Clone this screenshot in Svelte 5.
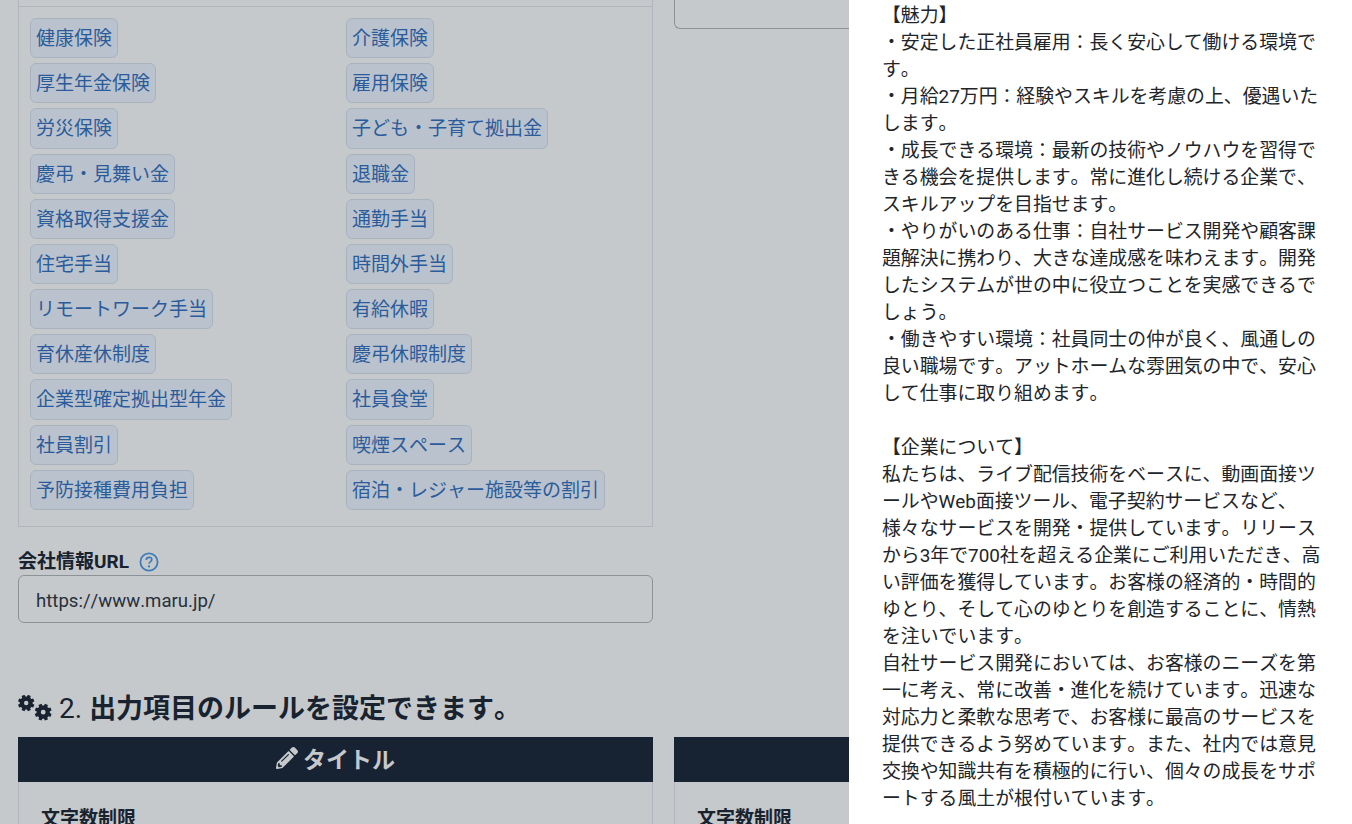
<script>
  const benefits = [
    ['健康保険', '介護保険'],
    ['厚生年金保険', '雇用保険'],
    ['労災保険', '子ども・子育て拠出金'],
    ['慶弔・見舞い金', '退職金'],
    ['資格取得支援金', '通勤手当'],
    ['住宅手当', '時間外手当'],
    ['リモートワーク手当', '有給休暇'],
    ['育休産休制度', '慶弔休暇制度'],
    ['企業型確定拠出型年金', '社員食堂'],
    ['社員割引', '喫煙スペース'],
    ['予防接種費用負担', '宿泊・レジャー施設等の割引']
  ];

  const description = `【魅力】
・安定した正社員雇用：長く安心して働ける環境です。
・月給27万円：経験やスキルを考慮の上、優遇いたします。
・成長できる環境：最新の技術やノウハウを習得できる機会を提供します。常に進化し続ける企業で、スキルアップを目指せます。
・やりがいのある仕事：自社サービス開発や顧客課題解決に携わり、大きな達成感を味わえます。開発したシステムが世の中に役立つことを実感できるでしょう。
・働きやすい環境：社員同士の仲が良く、風通しの良い職場です。アットホームな雰囲気の中で、安心して仕事に取り組めます。

【企業について】
私たちは、ライブ配信技術をベースに、動画面接ツールやWeb面接ツール、電子契約サービスなど、様々なサービスを開発・提供しています。リリースから3年で700社を超える企業にご利用いただき、高い評価を獲得しています。お客様の経済的・時間的ゆとり、そして心のゆとりを創造することに、情熱を注いでいます。
自社サービス開発においては、お客様のニーズを第一に考え、常に改善・進化を続けています。迅速な対応力と柔軟な思考で、お客様に最高のサービスを提供できるよう努めています。また、社内では意見交換や知識共有を積極的に行い、個々の成長をサポートする風土が根付いています。`;

  // gear outline with square teeth
  function gear(cx, cy, outer, inner, hole, teeth) {
    let d = '';
    const step = (Math.PI * 2) / teeth;
    for (let i = 0; i < teeth; i++) {
      const a = i * step + step / 2;
      const pts = [
        [inner, a - step * 0.34],
        [outer, a - step * 0.24],
        [outer, a + step * 0.24],
        [inner, a + step * 0.34]
      ];
      for (const [r, t] of pts) {
        d += `${d ? 'L' : 'M'}${(cx + r * Math.cos(t)).toFixed(2)} ${(cy + r * Math.sin(t)).toFixed(2)}`;
      }
    }
    d += `Z M${cx + hole} ${cy}a${hole} ${hole} 0 1 0 ${-2 * hole} 0a${hole} ${hole} 0 1 0 ${2 * hole} 0Z`;
    return d;
  }
</script>

<div class="page">
  <main class="main">
    <div class="top-row">
      <section class="benefits">
        <div class="benefit-grid">
          {#each benefits as row}
            {#each row as item}
              <div class="cell"><span class="tag">{item}</span></div>
            {/each}
          {/each}
        </div>
      </section>
      <div class="side-box"></div>
    </div>

    <div class="field">
      <div class="label">
        会社情報URL
        <svg class="help" viewBox="0 0 20 20" width="20" height="20" aria-hidden="true">
          <circle cx="10" cy="10" r="8.6" fill="none" stroke="currentColor" stroke-width="1.8" />
          <path d="M7.3 7.9c0-1.6 1.2-2.6 2.8-2.6s2.7 1 2.7 2.3c0 1.1-.6 1.7-1.5 2.3-.8.5-1.2 1-1.2 1.9" fill="none" stroke="currentColor" stroke-width="1.7" />
          <circle cx="10" cy="14.4" r="1.1" fill="currentColor" />
        </svg>
      </div>
      <div class="input">https://www.maru.jp/</div>
    </div>

    <h2 class="heading">
      <svg class="cogs" viewBox="0 0 34 26" width="34" height="26" aria-hidden="true">
        <path fill-rule="evenodd" d={gear(8.2, 8, 8.4, 6.5, 2.2, 8)} />
        <path fill-rule="evenodd" d={gear(25.2, 17.2, 8.6, 6.7, 2.4, 8)} />
      </svg>
      <span class="num">2.</span><span>出力項目のルールを設定できます。</span>
    </h2>

    <div class="rule-row">
      <section class="rule">
        <header class="rule-head">
          <svg viewBox="0 0 512 512" width="22" height="22" aria-hidden="true">
            <path fill="currentColor" d="M497.9 142.1l-46.1 46.1c-4.7 4.7-12.3 4.7-17 0l-111-111c-4.7-4.7-4.7-12.3 0-17l46.1-46.1c18.7-18.7 49.1-18.7 67.9 0l60.1 60.1c18.8 18.7 18.8 49.1 0 67.9zM284.2 99.8L21.6 362.4.4 483.9c-2.9 16.4 11.4 30.6 27.8 27.8l121.5-21.3 262.6-262.6c4.7-4.7 4.7-12.3 0-17l-111-111c-4.8-4.7-12.4-4.7-17.1 0zM124.1 339.9c-5.5-5.5-5.5-14.3 0-19.8l154-154c5.5-5.5 14.3-5.5 19.8 0s5.5 14.3 0 19.8l-154 154c-5.5 5.5-14.3 5.5-19.8 0zM88 424h48v36.3l-64.5 11.3-31.1-31.1L51.7 376H88v48z" />
          </svg>
          タイトル
        </header>
        <div class="rule-body"><strong>文字数制限</strong></div>
      </section>
      <section class="rule">
        <header class="rule-head"></header>
        <div class="rule-body"><strong>文字数制限</strong></div>
      </section>
    </div>
  </main>

  <aside class="panel">{description}</aside>
</div>

<style>
  :global(body) {
    margin: 0;
    background: #c6c9cc;
    font-family: Roboto, "Noto Sans CJK JP", sans-serif;
    font-kerning: none;
  }

  .page {
    display: flex;
    height: 824px;
    overflow: hidden;
    background: #c6c9cc;
    color: #18232f;
  }

  .main {
    width: 849px;
    flex-shrink: 0;
    box-sizing: border-box;
    padding-left: 18px;
    overflow: hidden;
  }

  .top-row {
    display: grid;
    grid-template-columns: 635px 260px;
    column-gap: 21px;
    align-items: start;
  }

  .benefits {
    box-sizing: border-box;
    height: 527px;
    padding: 18px 11px 0;
    border: 1px solid #b1b6bc;
    border-top: none;
    box-shadow: inset 0 6px 0 #c6c9cc, inset 0 7px 0 #b1b6bc;
  }

  .benefit-grid {
    display: grid;
    grid-template-columns: 316px 1fr;
    grid-auto-rows: 40.18px;
    row-gap: 5px;
  }

  .cell {
    display: flex;
  }

  .tag {
    box-sizing: border-box;
    padding: 1px 5px 0;
    line-height: 38px;
    font-size: 19px;
    color: #2a5c9b;
    background: #bac2cd;
    border: 1px solid #a9b3c0;
    border-radius: 6px;
    white-space: nowrap;
  }

  .side-box {
    height: 29px;
    box-sizing: border-box;
    border: 1px solid #8d9296;
    border-top: none;
    border-right: none;
    border-bottom-left-radius: 6px;
  }

  .field {
    margin-top: 22px;
    width: 635px;
  }

  .label {
    display: flex;
    align-items: center;
    gap: 10px;
    height: 26px;
    font-size: 19px;
    line-height: 22px;
    font-weight: 700;
    white-space: nowrap;
  }

  .help {
    color: #3f7cb5;
  }

  .input {
    box-sizing: border-box;
    height: 48px;
    padding: 2px 17px 0;
    line-height: 46px;
    font-size: 18.6px;
    color: #26303a;
    border: 1px solid #8d9296;
    border-radius: 6px;
  }

  .heading {
    display: flex;
    align-items: center;
    gap: 7px;
    margin: 68px 0 0;
    height: 36px;
    font-size: 27px;
    line-height: 36px;
    font-weight: 700;
    color: #18232f;
    white-space: nowrap;
  }

  .cogs {
    fill: #18232f;
    margin-bottom: 2px;
  }

  .num {
    font-weight: 400;
    font-size: 28px;
  }

  .rule-row {
    display: grid;
    grid-template-columns: 635px 260px;
    column-gap: 21px;
    margin-top: 10px;
  }

  .rule {
    border-left: 1px solid #b1b6bc;
    border-right: 1px solid #b1b6bc;
  }

  .rule-head {
    display: flex;
    align-items: center;
    justify-content: center;
    gap: 5px;
    height: 45px;
    margin: 0 -1px;
    padding-bottom: 3px;
    box-sizing: border-box;
    background: #172333;
    color: #c6c9cc;
    font-size: 23px;
    font-weight: 700;
  }

  .rule-body {
    padding: 23px 22px 0;
    font-size: 19px;
    line-height: 27px;
  }

  .panel {
    flex: 1;
    box-sizing: border-box;
    padding: 2px 31px 0 33px;
    background: #fff;
    color: #212529;
    font-size: 18.87px;
    line-height: 27px;
    white-space: pre-wrap;
  }
</style>
